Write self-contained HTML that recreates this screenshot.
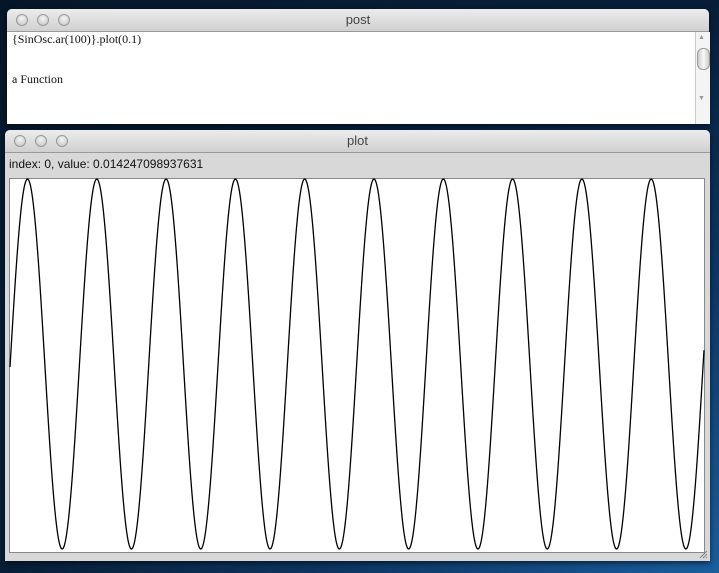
<!DOCTYPE html>
<html><head><meta charset="utf-8"><style>
body{margin:0;width:719px;height:573px;overflow:hidden;position:relative;
background:radial-gradient(ellipse at 100% 100%,#1a5e9e 0%,#0d3866 35%,#081e38 70%,#061628 100%);font-family:"Liberation Sans",sans-serif}
.win{position:absolute;background:#d8d8d8;border-radius:5px 5px 0 0;box-shadow:0 2px 6px rgba(0,0,0,.6)}
.tb{height:22px;background:linear-gradient(#ececec,#d0d0d0);border-radius:5px 5px 0 0;border-bottom:1px solid #9a9a9a;position:relative;text-align:center;font-size:13px;line-height:22px;color:#444}
.btn{position:absolute;top:5px;width:12px;height:12px;border-radius:50%;background:radial-gradient(circle at 50% 35%,#f4f4f4,#c2c2c2);border:1px solid #999;box-sizing:border-box}
</style></head><body>
<div class="win" style="left:7px;top:9px;width:702px;height:115px;">
 <div class="tb"><div class="btn" style="left:9px"></div><div class="btn" style="left:30px"></div><div class="btn" style="left:51px"></div>post</div>
 <div style="position:absolute;left:0;top:23px;width:688px;height:92px;background:#fff;font-family:'Liberation Serif',serif;font-size:12px;color:#111">
  <div style="position:absolute;left:5px;top:0">{SinOsc.ar(100)}.plot(0.1)</div>
  <div style="position:absolute;left:5px;top:40px">a Function</div>
 </div>
 <div style="position:absolute;left:688px;top:23px;width:14px;height:92px;background:#f4f4f4;border-left:1px solid #ccc">
  <div style="position:absolute;left:2px;top:2px;font-size:7px;color:#999">▲</div>
  <div style="position:absolute;left:1px;top:16px;width:11px;height:20px;border-radius:6px;background:linear-gradient(90deg,#ccc,#f8f8f8,#ccc);border:1px solid #999"></div>
  <div style="position:absolute;left:2px;top:63px;font-size:7px;color:#999">▼</div>
 </div>
</div>
<div class="win" style="left:5px;top:130px;width:705px;height:431px;">
 <div class="tb"><div class="btn" style="left:9px"></div><div class="btn" style="left:30px"></div><div class="btn" style="left:51px"></div>plot</div>
 <div style="position:absolute;left:4px;top:27px;font-size:12px;color:#111">index: 0, value: 0.014247098937631</div>
 <svg style="position:absolute;left:4px;top:48px" width="696" height="375"><rect x="0.5" y="0.5" width="695" height="374" fill="#fff" stroke="#888"/><path id="w" fill="none" stroke="#000" stroke-width="1.3"/></svg>
 <svg style="position:absolute;right:2px;bottom:2px" width="10" height="10"><path d="M9 2L2 9M9 5L5 9M9 8L8 9" stroke="#888"/></svg>
</div>
<script>
var d="";for(var x=1;x<=695;x+=0.5){var X=x+9;var y=364-185*Math.cos(2*Math.PI*(X-27.5)/69.3);d+=(x>1?"L":"M")+x.toFixed(1)+" "+(y-178).toFixed(2);}
document.getElementById("w").setAttribute("d",d);
</script>
</body></html>
